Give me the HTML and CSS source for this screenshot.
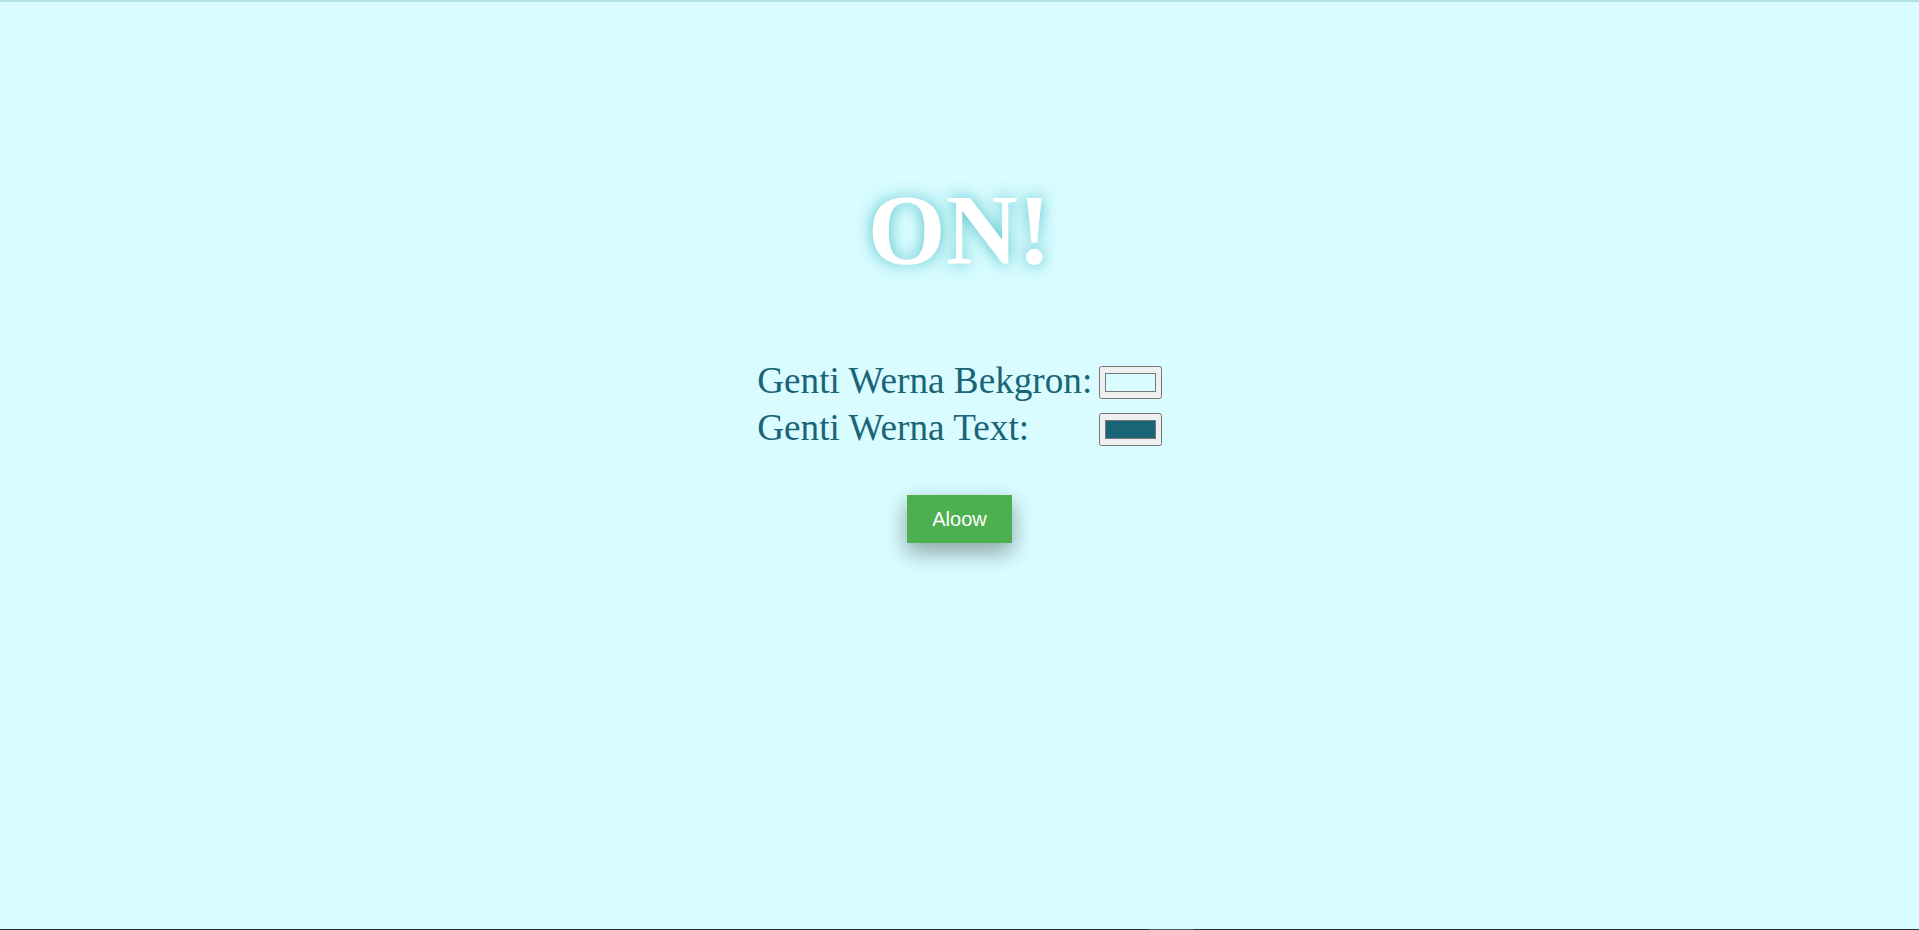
FILE: index.html
```html
<!DOCTYPE html>
<html lang="jv">
<head>
<meta charset="utf-8">
<title>ON!</title>
<link rel="stylesheet" href="styles.css">
</head>
<body>
<main class="page">
  <h1 class="title">ON!</h1>
  <div class="controls">
    <label class="label" for="bg">Genti Werna Bekgron:</label>
    <input class="picker" id="bg" type="color" value="#d8fcff">
    <label class="label" for="fg">Genti Werna Text:</label>
    <input class="picker" id="fg" type="color" value="#1a6478">
  </div>
  <button class="btn" type="button">Aloow</button>
</main>
<footer class="bottom-line"><span class="bottom-seg"></span></footer>
</body>
</html>
```

FILE: styles.css
```css
html, body {
  margin: 0;
  padding: 0;
}

body {
  background: #d8fcff;
  border-top: 2px solid #b0e0e6;
  box-sizing: border-box;
  min-height: 100vh;
  display: flex;
  flex-direction: column;
  font-family: "Liberation Serif", "Times New Roman", serif;
  color: #1a6478;
}

.page {
  flex: 1;
  display: flex;
  flex-direction: column;
  align-items: center;
}

.title {
  margin: 170px 0 0;
  font-family: "Liberation Serif", "Times New Roman", serif;
  font-weight: bold;
  font-size: 100px;
  line-height: normal;
  color: #ffffff;
  text-shadow: 0 0 16px rgba(60, 185, 190, 0.9);
}

.controls {
  margin-top: 70px;
  display: grid;
  grid-template-columns: auto auto;
  grid-auto-rows: 47px;
  column-gap: 7px;
  align-items: start;
}

.label {
  font-size: 37.2px;
  line-height: 47px;
  color: #1a6478;
  white-space: nowrap;
}

.picker {
  zoom: 1.25;
  margin: 6.8px 0 0;
}

.btn {
  margin-top: 44px;
  background: #4caf50;
  color: #ffffff;
  border: none;
  padding: 12.5px 25px;
  font-family: "Liberation Sans", Arial, sans-serif;
  font-size: 20px;
  line-height: normal;
  box-shadow: 0 10px 20px rgba(0, 0, 0, 0.2), 0 7.5px 25px rgba(0, 0, 0, 0.19);
  cursor: pointer;
}

.bottom-line {
  height: 1px;
  background: #20393e;
  display: flex;
}

.bottom-seg {
  width: 45px;
  margin-left: 1149px;
  background: #4a5f63;
}
```
